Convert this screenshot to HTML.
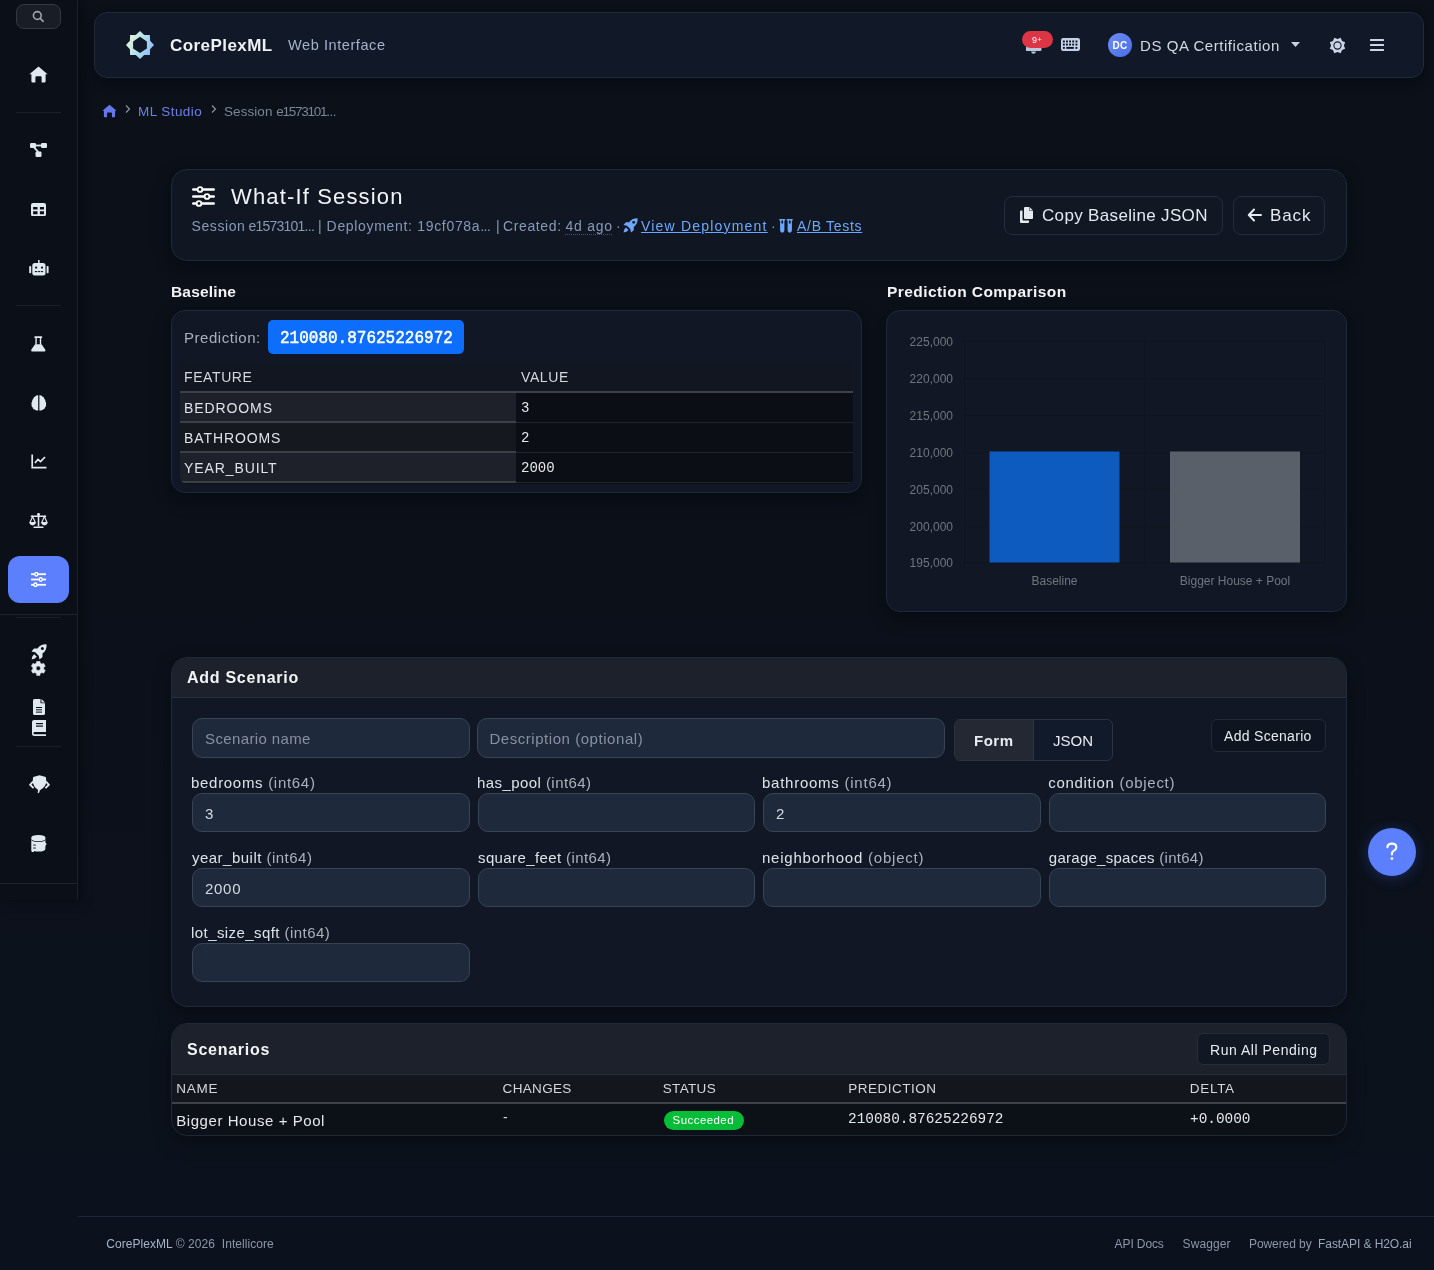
<!DOCTYPE html>
<html><head><meta charset="utf-8">
<style>
*{box-sizing:border-box;margin:0;padding:0}
html,body{width:1434px;height:1270px;overflow:hidden}
body{background:linear-gradient(180deg,#0b1019 0%,#0b1019 40%,#0c121d 100%);font-family:"Liberation Sans",sans-serif;color:#e5e7eb;position:relative}
.abs{position:absolute}
.mono{font-family:"Liberation Mono",monospace}
/* sidebar */
#sb{left:0;top:0;width:78px;height:900px;background:#0b0f17;border-right:1px solid #1b212b;box-shadow:4px 2px 10px rgba(0,0,0,.35)}
.sdiv{position:absolute;left:16px;width:45px;height:1px;background:#1a2029}
.sline{position:absolute;left:0;width:77px;height:1px;background:#1e242e}
.ic{position:absolute;fill:#e2e8f0}
/* header */
#hdr{left:94px;top:12px;width:1330px;height:66px;background:#111827;border:1px solid #1f2b3c;border-radius:13px;box-shadow:0 4px 14px rgba(0,0,0,.3)}
.card{position:absolute;background:#111725;border:1px solid #1e293b;border-radius:16px;box-shadow:0 6px 18px rgba(0,0,0,.35)}
.t{position:absolute;white-space:nowrap;line-height:1}
.inp{position:absolute;height:39px;background:#1e293b;border:1px solid #384354;border-radius:10px}
.lbl{position:absolute;white-space:nowrap;line-height:1;font-size:15px;color:#dde2e8}
.lbl span{color:#aab2bc}
.btn{position:absolute;border:1px solid #243042;border-radius:8px;background:#0f1521}
</style></head>
<body>
<div id="root" style="position:absolute;left:0;top:0;width:1434px;height:1270px;will-change:transform">
<!-- SIDEBAR -->
<div id="sb" class="abs">
  <div class="abs" style="left:16px;top:4px;width:45px;height:25px;border:1px solid #343942;border-radius:8px;background:#191d25"></div>
  <svg class="abs" style="left:32px;top:10px" width="13" height="13" viewBox="0 0 13 13"><circle cx="5.3" cy="5.5" r="3.9" fill="none" stroke="#a0a5ad" stroke-width="1.6"/><line x1="8.2" y1="8.4" x2="11.2" y2="11.3" stroke="#a0a5ad" stroke-width="1.6" stroke-linecap="round"/></svg>
  <!-- home -->
  <svg class="ic" style="left:29px;top:66px" width="19" height="17" viewBox="0 0 19 17"><path d="M9.5 0.6 L18.6 8.3 L16.6 8.3 L16.6 15.2 Q16.6 16.4 15.4 16.4 L12.6 16.4 L12.6 11.3 Q12.6 10.3 11.6 10.3 L7.4 10.3 Q6.4 10.3 6.4 11.3 L6.4 16.4 L3.6 16.4 Q2.4 16.4 2.4 15.2 L2.4 8.3 L0.4 8.3 Z"/></svg>
  <div class="sdiv" style="top:112px"></div>
  <!-- network -->
  <svg class="ic" style="left:30px;top:143px" width="17" height="14" viewBox="0 0 17 14"><rect x="0" y="0" width="6" height="5" rx="1.3"/><rect x="11" y="0" width="6" height="5" rx="1.3"/><rect x="5.5" y="8.5" width="6" height="5.5" rx="1.3"/><rect x="5" y="1.6" width="7" height="1.8"/><path d="M2.5 4 L7.5 9.5 L9 8.5 L4.5 3.5Z"/></svg>
  <!-- table -->
<svg class="ic" style="left:31px;top:202.8px" width="15" height="13.3" viewBox="0 0 15 13.3"><path fill-rule="evenodd" d="M2 0H13Q15 0 15 2V11.3Q15 13.3 13 13.3H2Q0 13.3 0 11.3V2Q0 0 2 0ZM2.1 4V6.5H6.5V4ZM8.9 4V6.5H13V4ZM2.1 8.2V11.2H6.5V8.2ZM8.9 8.2V11.2H13V8.2Z"/></svg>
<!-- robot -->
<svg class="ic" style="left:28.5px;top:259.5px" width="20" height="16" viewBox="0 0 20 16"><rect x="9.1" y="0" width="1.5" height="3.5"/><rect x="3.3" y="3" width="13.2" height="12.4" rx="2.5"/><rect x="0.2" y="6" width="2" height="7.3" rx=".8"/><rect x="17.6" y="6" width="2" height="7.3" rx=".8"/><g fill="#0b0f17"><circle cx="7.1" cy="7.6" r="1.15"/><circle cx="13" cy="7.6" r="1.15"/><rect x="5.8" y="11.1" width="2.3" height="1"/><rect x="8.8" y="11.1" width="2.3" height="1"/><rect x="11.8" y="11.1" width="2.3" height="1"/></g></svg>
<div class="sdiv" style="top:305px"></div>
  <!-- flask -->
<svg class="abs" style="left:31px;top:335.5px" width="15" height="16" viewBox="0 0 15 16"><g fill="#e2e8f0"><rect x="3.4" y="0.3" width="7.8" height="1.7" rx=".5"/><path d="M4.4 1.8 H5.8 V7.6 L5.4 8.6 H3.9 L4.4 7.4Z M10.2 1.8 H8.8 V7.6 L9.2 8.6 H10.7 L10.2 7.4Z"/><path d="M4.1 8.2 H10.5 L14.2 13.6 Q14.8 15.6 12.8 15.6 H1.8 Q-.2 15.6 .4 13.6Z"/></g></svg>
<!-- brain -->
<svg class="abs" style="left:30.7px;top:394.6px" width="16" height="16" viewBox="0 0 16 16"><g fill="#e2e8f0"><path d="M7.2 0.2 Q5.2 0 4.2 1.6 Q2.6 2 2.3 3.8 Q.8 4.8 1.2 6.6 Q0 7.8 .6 9.6 Q0 11 1.6 12.4 Q2 14.2 3.6 14.6 Q4.8 15.8 7.2 15.4Z"/><path d="M8.4 0.2 Q10.4 0 11.4 1.6 Q13 2 13.3 3.8 Q14.8 4.8 14.4 6.6 Q15.6 7.8 15 9.6 Q15.6 11 14 12.4 Q13.6 14.2 12 14.6 Q10.8 15.8 8.4 15.4Z"/></g></svg>
<!-- chart line -->
  <svg class="abs" style="left:30.5px;top:454px" width="16" height="15" viewBox="0 0 16 15"><path d="M1.2 0.5V13.6H15.5" fill="none" stroke="#e2e8f0" stroke-width="1.7"/><path d="M4 9 L7 5.3 L9.5 7.6 L14 3" fill="none" stroke="#e2e8f0" stroke-width="1.7" stroke-linejoin="round"/></svg>
  <!-- scale -->
  <svg class="ic" style="left:29px;top:512.5px" width="19" height="15.5" viewBox="0 0 21 16" preserveAspectRatio="none"><rect x="9.6" y="0" width="1.8" height="14"/><circle cx="10.5" cy="1.6" r="1.6"/><rect x="2" y="2.6" width="17" height="1.5"/><rect x="5" y="14" width="11" height="2" rx=".6"/><path d="M4 3.5 L1 10 H7Z M17 3.5 L14 10 H20Z" fill="none" stroke="#e2e8f0" stroke-width="1.3"/><path d="M0.6 10.3 H7.4 Q6.8 12.8 4 12.8 Q1.2 12.8 0.6 10.3Z M13.6 10.3 H20.4 Q19.8 12.8 17 12.8 Q14.2 12.8 13.6 10.3Z"/></svg>
  <!-- active sliders -->
  <div class="abs" style="left:8px;top:556px;width:61px;height:47px;background:#5c7ffe;border-radius:12px"></div>
  <svg class="abs" style="left:31px;top:572px" width="15" height="15" viewBox="0 0 17 15" preserveAspectRatio="none"><g stroke="#fff" stroke-width="1.8" fill="none"><line x1="0" y1="2.2" x2="17" y2="2.2"/><line x1="0" y1="7.5" x2="17" y2="7.5"/><line x1="0" y1="12.8" x2="17" y2="12.8"/></g><g fill="#5c7ffe" stroke="#fff" stroke-width="1.5"><circle cx="6" cy="2.2" r="1.7"/><circle cx="11" cy="7.5" r="1.7"/><circle cx="5" cy="12.8" r="1.7"/></g></svg>
  <div class="sline" style="top:614px"></div>
  <div class="sdiv" style="top:617px"></div>
  <!-- rocket -->
  <svg class="ic" style="left:31px;top:644px" width="16" height="16" viewBox="0 0 16 16"><path d="M15.6 0.4 Q10 0 6.5 4.5 L3 4.5 L0.5 7.5 L4.3 8.3 L7.7 11.7 L8.5 15.5 L11.5 13 L11.5 9.5 Q16 6 15.6 0.4Z"/><path d="M3.2 10.2 Q1 11.5 .6 15.4 Q4.5 15 5.8 12.8Z"/><circle cx="11.4" cy="4.6" r="1.5" fill="#0b0f17"/></svg>
  <!-- cog -->
<svg class="abs" style="left:31.2px;top:661px" width="14.6" height="14.6" viewBox="0 0 14.6 14.6"><path fill="#e2e8f0" fill-rule="evenodd" stroke="#e2e8f0" stroke-width=".5" stroke-linejoin="round" d="M5.48 2.01 L5.66 0.19 L8.94 0.19 L9.12 2.01 L10.97 3.07 L12.64 2.32 L14.28 5.17 L12.80 6.23 L12.80 8.37 L14.28 9.43 L12.64 12.28 L10.97 11.53 L9.12 12.59 L8.94 14.41 L5.66 14.41 L5.48 12.59 L3.63 11.53 L1.96 12.28 L0.32 9.43 L1.80 8.37 L1.80 6.23 L0.32 5.17 L1.96 2.32 L3.63 3.07Z M7.3 5.1 A2.2 2.2 0 1 0 7.3 9.5 A2.2 2.2 0 1 0 7.3 5.1Z"/></svg>
<!-- file -->
  <svg class="ic" style="left:32.5px;top:699px" width="12" height="16" viewBox="0 0 12 16"><path d="M1.5 0H7.5V4.3H12V14.5Q12 16 10.5 16H1.5Q0 16 0 14.5V1.5Q0 0 1.5 0Z"/><path d="M8.5 0L12 3.5H8.5Z"/><g fill="#0b0f17"><rect x="3" y="8" width="6" height="1"/><rect x="3" y="10.3" width="6" height="1"/><rect x="3" y="12.6" width="6" height="1"/></g></svg>
  <!-- book -->
  <svg class="ic" style="left:31.5px;top:719.5px" width="14" height="16" viewBox="0 0 14 16"><path d="M2 0H14V12H2.5Q1.5 12 1.5 13.2 1.5 14.3 2.5 14.3H14V16H2.5Q0 16 0 13.5V2Q0 0 2 0Z"/><rect x="4" y="3" width="7" height="1.2" fill="#0b0f17"/><rect x="4" y="5.5" width="7" height="1.2" fill="#0b0f17"/></svg>
  <div class="sdiv" style="top:746px"></div>
  <!-- hooded head icon -->
<svg class="abs" style="left:28.5px;top:775px" width="21" height="19" viewBox="0 0 21 19"><path fill="#e2e8f0" d="M10.5 0.3 L16.8 2 L17.3 5.5 Q17.3 12 11 15.2 L9.8 18.2 L8.6 17.8 L9.2 15 Q3.7 11.5 3.7 5.5 L4.2 2 Z"/><path d="M4 6.5 L1.2 9.8 L4.6 13.2 M17 6.5 L19.8 9.8 L16.4 13.2" fill="none" stroke="#e2e8f0" stroke-width="1.9" stroke-linejoin="miter"/></svg>
<!-- database -->
<svg class="ic" style="left:31px;top:834.5px" width="16" height="17.5" viewBox="0 0 16 17.5"><path d="M7.3 0 Q14.4 0 14.4 2.8 V7.6 Q15.8 8.3 15.4 9.6 Q14.9 10.6 14.4 10.7 V13.8 Q14.4 16.6 7.6 16.6 Q4.4 16.6 3.2 16 Q3 17.4 2 17.4 Q.5 17.4 .3 15.6 V2.8 Q.3 0 7.3 0Z"/><g fill="#0b0f17"><path d="M.3 4.2 Q2 6.2 7.3 6.2 Q12.6 6.2 14.4 4.2 V5 Q12.6 7 7.3 7 Q2 7 .3 5Z"/><rect x="2.2" y="9.6" width="2.6" height=".9"/><rect x="2.2" y="12.6" width="2.6" height=".9"/></g></svg>
<div class="sline" style="top:883px"></div>
</div>

<!-- HEADER -->
<div id="hdr" class="abs"></div>
<svg class="abs" style="left:126px;top:31px" width="28" height="28" viewBox="0 0 28 28">
  <defs><linearGradient id="lg" x1="0" y1="0.25" x2="1" y2="0.75"><stop offset="0" stop-color="#e8f8d0"/><stop offset=".5" stop-color="#b4e0f0"/><stop offset="1" stop-color="#86baf6"/></linearGradient></defs>
  <path fill="url(#lg)" fill-rule="evenodd" d="M14 0 L18.2 3.9 L23.9 4.1 L24.1 9.8 L28 14 L24.1 18.2 L23.9 23.9 L18.2 24.1 L14 28 L9.8 24.1 L4.1 23.9 L3.9 18.2 L0 14 L3.9 9.8 L4.1 4.1 L9.8 3.9 Z M14 5.8 L20.9 10.6 L20.9 17.4 L14 22 L7.1 17.4 L7.1 10.6 Z"/>
</svg>
<div class="t" style="left:170px;top:37px;font-size:17px;font-weight:bold;color:#eef1f5;letter-spacing:.44px">CorePlexML</div>
<div class="t" style="left:288px;top:38px;font-size:14.5px;color:#a3b3cc;letter-spacing:.58px">Web Interface</div>
<!-- bell -->
<svg class="abs" style="left:1026px;top:40px" width="16" height="15" viewBox="0 0 16 15"><path d="M1 6 H14 Q15.5 6 15.5 8 V9.5 Q15.5 11 14 11 H1 Q-.5 11 -.5 9.5 V8 Q-.5 6 1 6Z" fill="#b9c8da"/><path d="M5 11.5 H10 Q9.5 13.8 7.5 13.8 Q5.5 13.8 5 11.5Z" fill="#b9c8da"/></svg>
<div class="abs" style="left:1022px;top:31px;width:31px;height:17px;background:#dc3545;border-radius:9px"></div>
<div class="t" style="left:1032px;top:36px;font-size:9px;color:#fff">9<span style="font-size:7px;position:relative;top:-1px;margin-left:.5px">+</span></div>
<!-- keyboard -->
<svg class="abs" style="left:1061px;top:38px" width="19" height="13" viewBox="0 0 19 13"><rect x="0" y="0" width="19" height="13" rx="2.2" fill="#c4d1e6"/><g fill="#0d1320"><rect x="1.9" y="2.5" width="1.9" height="1.9"/><rect x="5.0" y="2.5" width="1.9" height="1.9"/><rect x="8.1" y="2.5" width="1.9" height="1.9"/><rect x="11.2" y="2.5" width="1.9" height="1.9"/><rect x="14.5" y="2.5" width="1.9" height="1.9"/><rect x="1.9" y="5.6" width="1.9" height="1.9"/><rect x="5.0" y="5.6" width="1.9" height="1.9"/><rect x="8.1" y="5.6" width="1.9" height="1.9"/><rect x="11.2" y="5.6" width="1.9" height="1.9"/><rect x="14.5" y="5.6" width="1.9" height="1.9"/><rect x="1.95" y="8.95" width="1.9" height="1.9"/><rect x="5.3" y="8.95" width="7.5" height="1.9"/><rect x="14.45" y="8.95" width="1.9" height="1.9"/></g></svg>
<!-- avatar -->
<div class="abs" style="left:1108px;top:33px;width:24px;height:24px;border-radius:50%;background:linear-gradient(135deg,#6d8cf6,#4b6ee6)"></div>
<div class="t" style="left:1112.5px;top:41px;font-size:10px;font-weight:bold;color:#fff;letter-spacing:.2px">DC</div>
<div class="t" style="left:1140px;top:38px;font-size:15px;color:#d2d9e3;letter-spacing:.56px">DS QA Certification</div>
<svg class="abs" style="left:1291px;top:42px" width="9" height="5" viewBox="0 0 9 5"><path d="M0 0H9L4.5 5Z" fill="#c8d0dc"/></svg>
<!-- gear -->
<svg class="abs" style="left:1328.5px;top:36.5px" width="17" height="17" viewBox="0 0 17 17"><path fill="#c9d4e4" d="M11.68 0.83 L13.03 3.97 L16.17 5.32 L14.90 8.50 L16.17 11.68 L13.03 13.03 L11.68 16.17 L8.50 14.90 L5.32 16.17 L3.97 13.03 L0.83 11.68 L2.10 8.50 L0.83 5.32 L3.97 3.97 L5.32 0.83 L8.50 2.10Z"/><circle cx="8.5" cy="8.5" r="3.6" fill="none" stroke="#111827" stroke-width="1.1"/></svg>
<!-- hamburger -->
<svg class="abs" style="left:1370px;top:39px" width="14" height="12" viewBox="0 0 14 12"><g fill="#cbd6e8"><rect x="0" y="0" width="14" height="2" rx=".5"/><rect x="0" y="5" width="14" height="2" rx=".5"/><rect x="0" y="10" width="14" height="2" rx=".5"/></g></svg>

<!-- BREADCRUMB -->
<svg class="abs" style="left:102px;top:104px" width="15" height="14" viewBox="0 0 19 17"><path fill="#6478e8" d="M9.5 0.6 L18.6 8.3 L16.6 8.3 L16.6 15.2 Q16.6 16.4 15.4 16.4 L12.6 16.4 L12.6 11.3 Q12.6 10.3 11.6 10.3 L7.4 10.3 Q6.4 10.3 6.4 11.3 L6.4 16.4 L3.6 16.4 Q2.4 16.4 2.4 15.2 L2.4 8.3 L0.4 8.3 Z"/></svg>
<svg class="abs" style="left:125px;top:105px" width="6" height="8" viewBox="0 0 6 8"><path d="M1 .5L4.5 4 1 7.5" fill="none" stroke="#8a93a3" stroke-width="1.2"/></svg>
<div class="t" style="left:138px;top:105px;font-size:13.5px;color:#6c80e6;letter-spacing:.43px">ML Studio</div>
<svg class="abs" style="left:211px;top:105px" width="6" height="8" viewBox="0 0 6 8"><path d="M1 .5L4.5 4 1 7.5" fill="none" stroke="#8a93a3" stroke-width="1.2"/></svg>
<div class="t" id="bc2a" style="left:224.0px;top:105px;font-size:13.5px;color:#7d8697;letter-spacing:0.07px">Session</div><div class="t" id="bc2b" style="left:276.2px;top:105px;font-size:13.5px;color:#7d8697;letter-spacing:-1.24px">e1573101<span style="letter-spacing:-.6px">...</span></div>

<!-- TITLE CARD -->
<div class="card" style="left:171px;top:169px;width:1176px;height:92px;background:#101722"></div>
<svg class="abs" style="left:192px;top:186px" width="23" height="21" viewBox="0 0 23 21"><g stroke="#fff" stroke-width="2.6" stroke-linecap="round" fill="none"><line x1="1.3" y1="3.5" x2="21.7" y2="3.5"/><line x1="1.3" y1="10.5" x2="21.7" y2="10.5"/><line x1="1.3" y1="17.5" x2="21.7" y2="17.5"/></g><g fill="#101722" stroke="#fff" stroke-width="1.9"><circle cx="8" cy="3.5" r="2.4"/><circle cx="15" cy="10.5" r="2.4"/><circle cx="7" cy="17.5" r="2.4"/></g></svg>
<div class="t" style="left:231px;top:186px;font-size:22px;color:#f3f4f6;letter-spacing:1.15px">What-If Session</div>
<div class="t" id="s1a" style="left:191.5px;top:219px;font-size:14px;color:#8799b8;letter-spacing:0.59px">Session</div><div class="t" id="s1b" style="left:248.6px;top:219px;font-size:14px;color:#8799b8;letter-spacing:-0.80px">e1573101<span style="letter-spacing:-.6px">...</span></div>
<div class="t" style="left:318px;top:219px;font-size:14px;color:#8799b8">|</div>
<div class="t" id="s2" style="left:326.6px;top:219px;font-size:14px;color:#8799b8;letter-spacing:0.68px">Deployment: 19cf078a<span style="letter-spacing:-.6px">...</span></div>
<div class="t" style="left:496px;top:219px;font-size:14px;color:#8799b8">|</div>
<div class="t" id="s3" style="left:503.0px;top:219px;font-size:14px;color:#8799b8;letter-spacing:0.62px">Created:</div>
<div class="t" id="s4" style="left:565.6px;top:219px;font-size:14px;color:#8799b8;letter-spacing:0.74px">4d ago</div>
<div class="abs" style="left:565px;top:234px;width:47px;height:0;border-top:1px dotted #4a5568"></div>
<div class="t" style="left:616px;top:219px;font-size:14px;color:#8799b8">·</div>
<svg class="abs" style="left:623px;top:218px" width="15" height="15" viewBox="0 0 16 16"><path fill="#6ea8fe" d="M15.6 0.4 Q10 0 6.5 4.5 L3 4.5 L0.5 7.5 L4.3 8.3 L7.7 11.7 L8.5 15.5 L11.5 13 L11.5 9.5 Q16 6 15.6 0.4Z M3.2 10.2 Q1 11.5 .6 15.4 Q4.5 15 5.8 12.8Z"/><circle cx="11.4" cy="4.6" r="1.5" fill="#101722"/></svg>
<div class="t" style="left:641px;top:219px;font-size:14px;color:#6ea8fe;text-decoration:underline;letter-spacing:1.2px">View Deployment</div>
<div class="t" style="left:771px;top:219px;font-size:14px;color:#8799b8">·</div>
<svg class="abs" style="left:779px;top:219px" width="14" height="14" viewBox="0 0 14 14"><path fill="#6ea8fe" d="M0.3 0H6.2V1.4H5.4V10.8Q5.4 13.6 3.25 13.6 1.1 13.6 1.1 10.8V1.4H0.3Z M7.8 0H13.7V1.4H12.9V10.8Q12.9 13.6 10.75 13.6 8.6 13.6 8.6 10.8V1.4H7.8Z"/><path fill="#101722" d="M2.4 1.4H4.1V4.5H2.4Z M9.9 1.4H11.6V4.5H9.9Z"/></svg>
<div class="t" style="left:797px;top:219px;font-size:14px;color:#6ea8fe;text-decoration:underline;letter-spacing:.7px">A/B Tests</div>
<!-- buttons -->
<div class="btn" style="left:1004px;top:196px;width:219px;height:39px;background:#111823;border-color:#222d3d"></div>
<svg class="abs" style="left:1019px;top:207px" width="16" height="16" viewBox="0 0 16 16"><path fill="#e5e9f0" d="M6 0H10.5L14 3.5V11Q14 12 13 12H6Q5 12 5 11V1Q5 0 6 0Z"/><path fill="#e5e9f0" d="M3.5 3.5V12.5Q3.5 13.5 4.5 13.5H10V15Q10 16 9 16H2Q1 16 1 15V4.5Q1 3.5 2 3.5Z"/><path fill="#111823" d="M10.3 0 V3.7 H14 V3.2 H10.8 V0Z"/></svg>
<div class="t" style="left:1042px;top:207px;font-size:17px;color:#e5e9f0;letter-spacing:.34px">Copy Baseline JSON</div>
<div class="btn" style="left:1233px;top:196px;width:92px;height:39px;background:#111823;border-color:#222d3d"></div>
<svg class="abs" style="left:1247px;top:208px" width="15" height="14" viewBox="0 0 15 14"><path d="M7 1.5L1.8 7 7 12.5M2 7H14" fill="none" stroke="#e5e9f0" stroke-width="2" stroke-linecap="round" stroke-linejoin="round"/></svg>
<div class="t" style="left:1270px;top:207px;font-size:17px;color:#e5e9f0;letter-spacing:.9px">Back</div>

<!-- BASELINE -->
<div class="t" style="left:171px;top:284px;font-size:15.5px;font-weight:bold;color:#f3f4f6;letter-spacing:.17px">Baseline</div>
<div class="card" style="left:171px;top:310px;width:691px;height:183px;border-radius:14px"></div>
<div class="t" style="left:184px;top:330px;font-size:15px;color:#a9b0bb;letter-spacing:.54px">Prediction:</div>
<div class="abs" style="left:268px;top:320px;width:196px;height:34px;background:#0d6efd;border-radius:5px"></div>
<div class="t mono" style="left:280px;top:330px;font-size:16px;color:#fff;-webkit-text-stroke:.45px #fff;transform:scaleY(1.1);transform-origin:0 0">210080.87625226972</div>
<div class="abs" style="left:180px;top:363px;width:673px;height:121px;border-radius:0 0 7px 7px;overflow:hidden;background:#0b0e15">
  <div class="abs" style="left:0;top:0;width:673px;height:28px;background:#121620"></div>
  <div class="abs" style="left:0;top:28px;width:673px;height:2px;background:#3d4249"></div>
  <div class="abs" style="left:0;top:30px;width:336px;height:28px;background:#1e2129"></div>
  <div class="abs" style="left:0;top:58px;width:336px;height:2px;background:#3b4048"></div>
  <div class="abs" style="left:336px;top:58.5px;width:337px;height:1px;background:#22262d"></div>
  <div class="abs" style="left:0;top:60px;width:336px;height:28px;background:#15181f"></div>
  <div class="abs" style="left:0;top:88px;width:336px;height:2px;background:#3b4048"></div>
  <div class="abs" style="left:336px;top:88.5px;width:337px;height:1px;background:#22262d"></div>
  <div class="abs" style="left:0;top:90px;width:336px;height:28px;background:#1e2129"></div>
  <div class="abs" style="left:0;top:118px;width:336px;height:2px;background:#3b4048"></div>
  <div class="abs" style="left:336px;top:118.5px;width:337px;height:1px;background:#22262d"></div>
</div>
<div class="t" style="left:184px;top:370px;font-size:14px;color:#d4d8de;letter-spacing:.6px">FEATURE</div>
<div class="t" style="left:521px;top:370px;font-size:14px;color:#d4d8de;letter-spacing:.6px">VALUE</div>
<div class="t" style="left:184px;top:401px;font-size:14px;color:#dfe3e8;letter-spacing:.9px">BEDROOMS</div>
<div class="t mono" style="left:521px;top:401px;font-size:14px;color:#e5e7eb">3</div>
<div class="t" style="left:184px;top:431px;font-size:14px;color:#dfe3e8;letter-spacing:.9px">BATHROOMS</div>
<div class="t mono" style="left:521px;top:431px;font-size:14px;color:#e5e7eb">2</div>
<div class="t" style="left:184px;top:461px;font-size:14px;color:#dfe3e8;letter-spacing:.9px">YEAR_BUILT</div>
<div class="t mono" style="left:521px;top:461px;font-size:14px;color:#e5e7eb">2000</div>

<!-- CHART -->
<div class="t" style="left:887px;top:284px;font-size:15.5px;font-weight:bold;color:#f3f4f6;letter-spacing:.43px">Prediction Comparison</div>
<div class="card" style="left:886px;top:310px;width:461px;height:302px;border-radius:14px"></div>
<svg class="abs" style="left:886px;top:310px" width="461" height="302" viewBox="0 0 461 302">
  <g stroke="#0f141d" stroke-width="1">
    <line x1="78.5" y1="31" x2="78.5" y2="258"/><line x1="258.5" y1="31" x2="258.5" y2="258"/><line x1="438.5" y1="31" x2="438.5" y2="258"/>
    <line x1="78" y1="31.5" x2="438" y2="31.5"/>
    <line x1="78" y1="68.5" x2="438" y2="68.5"/>
    <line x1="78" y1="105.5" x2="438" y2="105.5"/>
    <line x1="78" y1="142.5" x2="438" y2="142.5"/>
    <line x1="78" y1="179.5" x2="438" y2="179.5"/>
    <line x1="78" y1="216.5" x2="438" y2="216.5"/>
    <line x1="78" y1="252.5" x2="438" y2="252.5"/>
  </g>
  <rect x="103.5" y="141.5" width="130" height="111" fill="#0e5bc0"/>
  <rect x="284" y="141.5" width="130" height="111" fill="#5a606a"/>
  <g font-family="Liberation Sans" font-size="12" fill="#70767f" text-anchor="end">
    <text x="67" y="35.5">225,000</text><text x="67" y="72.5">220,000</text><text x="67" y="109.5">215,000</text><text x="67" y="146.5">210,000</text><text x="67" y="183.5">205,000</text><text x="67" y="220.5">200,000</text><text x="67" y="256.5">195,000</text>
  </g>
  <g font-family="Liberation Sans" font-size="12" fill="#70767f" text-anchor="middle">
    <text x="168.5" y="275">Baseline</text><text x="349" y="275">Bigger House + Pool</text>
  </g>
</svg>

<!-- ADD SCENARIO -->
<div class="card" style="left:171px;top:657px;width:1176px;height:350px;overflow:hidden">
  <div class="abs" style="left:0;top:0;width:1176px;height:40px;background:#1c212b;border-bottom:1px solid #2a303b"></div>
</div>
<div class="t" style="left:187px;top:670px;font-size:16px;font-weight:bold;color:#f3f4f6;letter-spacing:.73px">Add Scenario</div>
<div class="inp" style="left:192px;top:718px;width:278px;height:40px"></div>
<div class="t" id="sn" style="left:205px;top:731px;font-size:15px;color:#8891a0;letter-spacing:.38px">Scenario name</div>
<div class="inp" style="left:477px;top:718px;width:468px;height:40px"></div>
<div class="t" id="desc" style="left:489.4px;top:731px;font-size:15px;color:#8891a0;letter-spacing:0.55px">Description (optional)</div>
<div class="abs" style="left:954px;top:719px;width:159px;height:42px;border:1px solid #2b3340;border-radius:6px;overflow:hidden;background:#111a2b">
  <div class="abs" style="left:0;top:0;width:79px;height:42px;background:#232833;border-right:1px solid #2f3540"></div>
</div>
<div class="t" id="form" style="left:974px;top:733px;font-size:15px;font-weight:bold;color:#e8ebef;letter-spacing:.5px">Form</div>
<div class="t" id="json" style="left:1053px;top:733px;font-size:15px;color:#e8ebef">JSON</div>
<div class="btn" style="left:1211px;top:719px;width:115px;height:33px;background:#0f1520;border-color:#232a36;border-radius:6px"></div>
<div class="t" style="left:1224px;top:729px;font-size:14px;color:#e8ebef;letter-spacing:.3px">Add Scenario</div>

<div class="lbl" id="lb_bedrooms" style="left:191.0px;top:775px;letter-spacing:0.70px">bedrooms <span>(int64)</span></div>
<div class="inp" style="left:192px;top:793px;width:278px"></div>
<div class="t" style="left:205px;top:806px;font-size:15px;color:#d5dae1;letter-spacing:.7px">3</div>
<div class="lbl" id="lb_has_pool" style="left:477.0px;top:775px;letter-spacing:0.43px">has_pool <span>(int64)</span></div>
<div class="inp" style="left:478px;top:793px;width:277px"></div>
<div class="lbl" id="lb_bathrooms" style="left:762.0px;top:775px;letter-spacing:0.75px">bathrooms <span>(int64)</span></div>
<div class="inp" style="left:763px;top:793px;width:278px"></div>
<div class="t" style="left:776px;top:806px;font-size:15px;color:#d5dae1;letter-spacing:.7px">2</div>
<div class="lbl" id="lb_condition" style="left:1048.2px;top:775px;letter-spacing:0.71px">condition <span>(object)</span></div>
<div class="inp" style="left:1049px;top:793px;width:277px"></div>

<div class="lbl" id="lb_year_built" style="left:192.0px;top:850px;letter-spacing:0.48px">year_built <span>(int64)</span></div>
<div class="inp" style="left:192px;top:868px;width:278px"></div>
<div class="t" style="left:205px;top:881px;font-size:15px;color:#d5dae1;letter-spacing:.7px">2000</div>
<div class="lbl" id="lb_square_feet" style="left:478.0px;top:850px;letter-spacing:0.39px">square_feet <span>(int64)</span></div>
<div class="inp" style="left:478px;top:868px;width:277px"></div>
<div class="lbl" id="lb_neighborhood" style="left:762.0px;top:850px;letter-spacing:0.78px">neighborhood <span>(object)</span></div>
<div class="inp" style="left:763px;top:868px;width:278px"></div>
<div class="lbl" id="lb_garage_spaces" style="left:1048.8px;top:850px;letter-spacing:0.27px">garage_spaces <span>(int64)</span></div>
<div class="inp" style="left:1049px;top:868px;width:277px"></div>

<div class="lbl" id="lb_lot_size_sqft" style="left:191.0px;top:925px;letter-spacing:0.43px">lot_size_sqft <span>(int64)</span></div>
<div class="inp" style="left:192px;top:943px;width:278px"></div>

<!-- SCENARIOS -->
<div class="card" style="left:171px;top:1023px;width:1176px;height:113px;overflow:hidden;background:#0c1017">
  <div class="abs" style="left:0;top:0;width:1176px;height:51px;background:#1c212b;border-bottom:1px solid #2a303b"></div>
  <div class="abs" style="left:0;top:51px;width:1176px;height:27px;background:#13161d"></div>
  <div class="abs" style="left:0;top:78px;width:1176px;height:2px;background:#3d4249"></div>
</div>
<div class="t" style="left:187px;top:1042px;font-size:16px;font-weight:bold;color:#f3f4f6;letter-spacing:.73px">Scenarios</div>
<div class="btn" style="left:1197px;top:1033px;width:133px;height:32px;background:#111723;border-color:#262d39;border-radius:6px"></div>
<div class="t" style="left:1210px;top:1043px;font-size:14px;color:#e8ebef;letter-spacing:.53px">Run All Pending</div>
<div class="t" id="h_name" style="left:176.2px;top:1082px;font-size:13.5px;color:#d4d8de;letter-spacing:0.80px">NAME</div>
<div class="t" id="h_changes" style="left:502.6px;top:1082px;font-size:13.5px;color:#d4d8de;letter-spacing:0.33px">CHANGES</div>
<div class="t" id="h_status" style="left:662.8px;top:1082px;font-size:13.5px;color:#d4d8de;letter-spacing:0.32px">STATUS</div>
<div class="t" id="h_pred" style="left:848.2px;top:1082px;font-size:13.5px;color:#d4d8de;letter-spacing:0.51px">PREDICTION</div>
<div class="t" id="h_delta" style="left:1189.8px;top:1082px;font-size:13.5px;color:#d4d8de;letter-spacing:0.70px">DELTA</div>
<div class="t" id="bhp" style="left:176.2px;top:1113px;font-size:15px;color:#e5e7eb;letter-spacing:0.57px">Bigger House + Pool</div>
<div class="t" style="left:503px;top:1110px;font-size:14px;color:#d4d8de">-</div>
<div class="abs" style="left:664px;top:1111px;width:80px;height:19px;background:#06bc38;border-radius:10px"></div>
<div class="t" id="succ" style="left:672.6px;top:1115px;font-size:11.5px;color:#fff;letter-spacing:0.43px">Succeeded</div>
<div class="t mono" style="left:848px;top:1112px;font-size:14.4px;color:#e5e7eb">210080.87625226972</div>
<div class="t mono" style="left:1190px;top:1112px;font-size:14.4px;color:#e5e7eb">+0.0000</div>

<!-- HELP -->
<div class="abs" style="left:1368px;top:828px;width:48px;height:48px;border-radius:50%;background:#5b7ffd;box-shadow:0 2px 14px rgba(60,100,240,.3)"></div>
<svg class="abs" style="left:1385px;top:842px" width="14" height="20" viewBox="0 0 14 20"><path d="M2.4 5.2 Q2.6 1.6 7 1.6 Q11.3 1.6 11.3 5.2 Q11.3 7.4 8.6 8.9 Q6.9 9.9 6.9 11.6 V12.4" fill="none" stroke="#fff" stroke-width="2.1" stroke-linecap="round"/><circle cx="6.9" cy="16.6" r="1.35" fill="#fff"/></svg>
<!-- FOOTER -->
<div class="abs" style="left:78px;top:1216px;width:1356px;height:1px;background:#1d2636"></div>
<div class="t" id="fl" style="left:106.2px;top:1238px;font-size:12px;color:#8c96a8;letter-spacing:0.06px"><span style="color:#a6b3c8">CorePlexML</span> © 2026 &nbsp;Intellicore</div>
<div class="t" id="fapi" style="left:1114.6px;top:1238px;font-size:12px;color:#8c96a8;letter-spacing:-0.11px">API Docs</div>
<div class="t" id="fsw" style="left:1182.6px;top:1238px;font-size:12px;color:#8c96a8;letter-spacing:0.07px">Swagger</div>
<div class="t" id="fr" style="left:1249.0px;top:1238px;font-size:12px;color:#8c96a8;letter-spacing:-0.08px">Powered by &nbsp;<span style="color:#9aa6ba">FastAPI &amp; H2O.ai</span></div>
</div>
</body></html>
